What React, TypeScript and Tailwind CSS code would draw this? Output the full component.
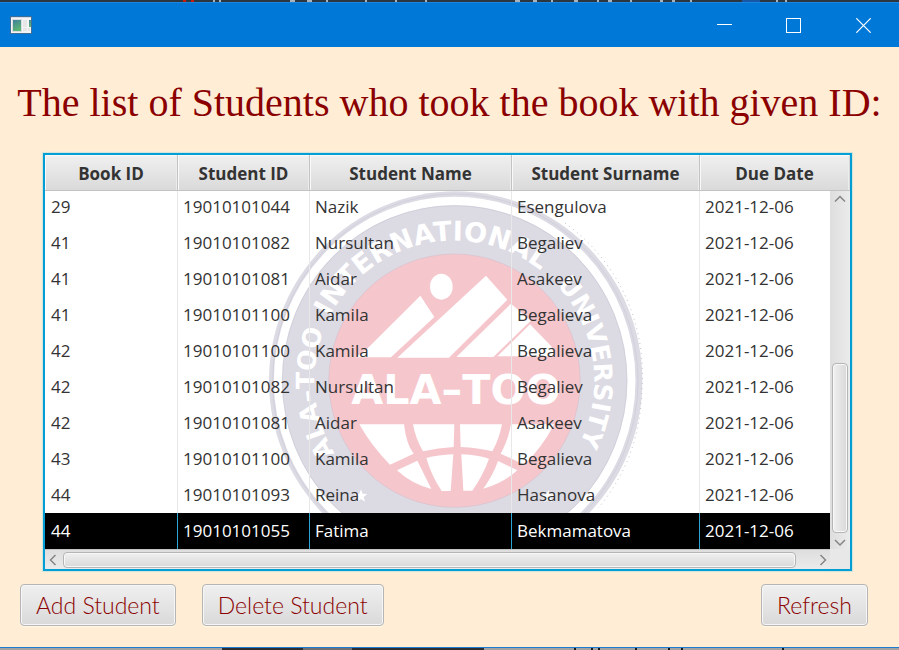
import React from "react";

type Loan = {
  book: string;
  student: string;
  name: string;
  surname: string;
  due: string;
};

const columns = ["Book ID", "Student ID", "Student Name", "Student Surname", "Due Date"];

const loans: Loan[] = [
  { book: "29", student: "19010101044", name: "Nazik", surname: "Esengulova", due: "2021-12-06" },
  { book: "41", student: "19010101082", name: "Nursultan", surname: "Begaliev", due: "2021-12-06" },
  { book: "41", student: "19010101081", name: "Aidar", surname: "Asakeev", due: "2021-12-06" },
  { book: "41", student: "19010101100", name: "Kamila", surname: "Begalieva", due: "2021-12-06" },
  { book: "42", student: "19010101100", name: "Kamila", surname: "Begalieva", due: "2021-12-06" },
  { book: "42", student: "19010101082", name: "Nursultan", surname: "Begaliev", due: "2021-12-06" },
  { book: "42", student: "19010101081", name: "Aidar", surname: "Asakeev", due: "2021-12-06" },
  { book: "43", student: "19010101100", name: "Kamila", surname: "Begalieva", due: "2021-12-06" },
  { book: "44", student: "19010101093", name: "Reina", surname: "Hasanova", due: "2021-12-06" },
  { book: "44", student: "19010101055", name: "Fatima", surname: "Bekmamatova", due: "2021-12-06" },
];

const selectedRow = 9;

function AppIcon() {
  return (
    <svg width="22" height="18" viewBox="0 0 22 18" aria-hidden="true">
      <defs>
        <linearGradient id="pane" x1="0" y1="0" x2="0.4" y2="1">
          <stop offset="0" stopColor="#3f7f9c" />
          <stop offset="1" stopColor="#5cb574" />
        </linearGradient>
      </defs>
      <rect width="22" height="18" fill="#3f6f96" />
      <rect x="1" y="1" width="20" height="16" fill="#f4f4f4" />
      <rect x="1" y="1" width="20" height="1" fill="#d5dbe6" />
      <rect x="2" y="3" width="10" height="13" fill="#d9dde2" />
      <rect x="3" y="4" width="8" height="11" fill="url(#pane)" />
      <rect x="13" y="4" width="4" height="7" fill="#e6e6e6" />
      <rect x="13" y="12" width="4" height="3" fill="#e6e6e6" />
      <rect x="19" y="4" width="2" height="7" fill="url(#pane)" />
      <rect x="18" y="12" width="2" height="3" fill="#e6e6e6" />
    </svg>
  );
}

function TitleBar() {
  return (
    <header className="flex h-[45px] items-center justify-between border-t border-[#1c86dc] bg-[#0078d7] pl-[10px]">
      <AppIcon />
      <div className="flex h-full">
        <button type="button" aria-label="Minimize" className="flex w-[69px] items-center justify-center">
          <svg width="15" height="15" viewBox="0 0 15 15" shapeRendering="crispEdges">
            <path d="M0 6.5H15" stroke="#fff" />
          </svg>
        </button>
        <button type="button" aria-label="Maximize" className="flex w-[69px] items-center justify-center">
          <svg width="15" height="15" viewBox="0 0 15 15" shapeRendering="crispEdges">
            <rect x="0.5" y="0.5" width="14" height="14" fill="none" stroke="#fff" />
          </svg>
        </button>
        <button type="button" aria-label="Close" className="flex w-[71px] items-center justify-center">
          <svg width="15" height="15" viewBox="0 0 15 15">
            <path d="M0.3 0.3L14.7 14.7M14.7 0.3L0.3 14.7" stroke="#fff" strokeWidth="1.2" />
          </svg>
        </button>
      </div>
    </header>
  );
}

function TopEdge() {
  return (
    <div className="h-[2px] overflow-hidden bg-[#2b3640]">
      <svg width="899" height="2" viewBox="0 0 899 2" shapeRendering="crispEdges" aria-hidden="true">
        <path d="M183 1h3M191 1h3" stroke="#c8190b" strokeWidth="2" />
        <path
          d="M213 1h2M219 1h2M290 1h5M307 1h5M326 0.5h2M365 1h2M395 1h2M425 0.5h2M515 1h5M533 1h4M551 1h2M574 1h4M597 1h2M608 1h4M630 1h2M660 1h3M672 1h3M690 1h2M776 1h2M785 1h2"
          stroke="#aab3bb"
          strokeWidth="2"
        />
        <path d="M742 1h18" stroke="#1657a8" strokeWidth="2" />
      </svg>
    </div>
  );
}

function BottomEdge() {
  return (
    <div className="h-[3px] overflow-hidden border-t border-[#1c7cd0] bg-[#a3a3a3]">
      <svg width="899" height="2" viewBox="0 0 899 2" shapeRendering="crispEdges" aria-hidden="true">
        <path d="M222 1h81M352 1h132" stroke="#2e2c2e" strokeWidth="2" />
        <path d="M303 1h49" stroke="#706e70" strokeWidth="2" />
        <path d="M574 1h2M591 1h2M598 1h2M635 1h2M668 1h2M681 1h2M782 1h2" stroke="#1a1a1a" strokeWidth="2" />
      </svg>
    </div>
  );
}

function Watermark() {
  return (
    <svg
      className="absolute top-9 left-[220px]"
      width="385"
      height="358"
      viewBox="0 9 1155 1074"
      aria-hidden="true"
      fontFamily="'DejaVu Sans', sans-serif"
      fontWeight="bold"
    >
      <defs>
        <path id="ring" d="M568 998A420 420 0 0 1 568 158A420 420 0 0 1 568 998" />
      </defs>
      <ellipse cx="572" cy="578" rx="560" ry="568" fill="#dcdae3" />
      <ellipse cx="571" cy="578" rx="548" ry="560" fill="none" stroke="#cccad8" strokeWidth="2" />
      <ellipse cx="569" cy="578" rx="530" ry="539" fill="none" stroke="#fff" strokeWidth="25" />
      <ellipse cx="569" cy="578" rx="517" ry="525" fill="none" stroke="#c9c8d4" strokeWidth="2" />
      <path
        d="M900 105C1060 220 1138 400 1132 580C1128 740 1090 850 1000 960"
        fill="none"
        stroke="#c4c2d0"
        strokeWidth="3"
        strokeDasharray="3 12"
      />
      <ellipse cx="568.5" cy="578" rx="377" ry="380" fill="#f5c7cd" stroke="#d8bfcc" strokeWidth="2" />

      <g fill="#fff" fontSize="76">
        <text>
          <textPath href="#ring" startOffset="430">ALA–TOO</textPath>
        </text>
        <text fontSize="82">
          <textPath href="#ring" startOffset="858">INTERNATIONAL</textPath>
        </text>
        <text>
          <textPath href="#ring" startOffset="1662">UNIVERSITY</textPath>
        </text>
      </g>

      <g fill="#fff">
        <ellipse cx="529" cy="296" rx="34" ry="39" />
        <path d="M466 323L508 387L378 508H272L305 484Z" />
        <path d="M663 263L727 335L552 509H397Z" />
        <path d="M738 347L797 398L685 507H574Z" />
        <path d="M795 409L858 474L872 505H697Z" />
        <path d="M283 709H417Q424 770 446 797L375 830Q320 775 283 709Z" />
        <path d="M444 709H568L566 777Q520 780 474 790Q451 750 444 709Z" />
        <path d="M585 709H711Q702 755 682 790Q640 779 587 777Z" />
        <path d="M738 709H868Q830 780 778 830L707 797Q730 755 738 709Z" />
        <path d="M396 847L457 818L499 903Q440 888 396 847Z" />
        <path d="M484 810Q520 801 565 799L557 909H530Q500 865 484 810Z" />
        <path d="M589 799Q640 801 672 812Q655 860 622 908H595Z" />
        <path d="M699 819L757 847Q715 885 655 902Q685 860 699 819Z" />
        <path d="M288 904l5 13 14 1-11 9 4 14-12-8-12 8 4-14-11-9 14-1Z" />
        <path d="M850 906l5 13 14 1-11 9 4 14-12-8-12 8 4-14-11-9 14-1Z" />
      </g>
      <text x="573" y="648" fontSize="124" textAnchor="middle" fill="#fff">
        ALA–TOO
      </text>
    </svg>
  );
}

function Chevron({ path, label }: { path: string; label: string }) {
  return (
    <button type="button" aria-label={label} className="flex size-4 items-center justify-center">
      <svg width="12" height="12" viewBox="0 0 12 12">
        <path d={path} fill="none" stroke="#858585" strokeWidth="1.5" />
      </svg>
    </button>
  );
}

function VerticalScrollbar() {
  return (
    <div className="absolute top-9 right-0 bottom-0 flex w-5 flex-col items-center bg-linear-to-r from-[#dedede] to-[#ebebeb]">
      <Chevron label="Scroll up" path="M1 8.500L6 3.500L11 8.500" />
      <div className="flex w-full flex-1 flex-col justify-end px-[2px] pt-[156px]">
        <div className="flex-1 rounded-[4px] border border-[#b5b5b5] bg-linear-to-r from-[#f0f0f0] to-[#d9d9d9] shadow-[inset_0_0_0_1px_#f8f8f8]" />
      </div>
      <Chevron label="Scroll down" path="M1 5L6 10L11 5" />
    </div>
  );
}

function HorizontalScrollbar() {
  return (
    <div className="flex h-5 bg-[#e8e8e8]">
      <div className="flex flex-1 items-center border-t border-[#c4c4c4] bg-linear-to-b from-[#dedede] to-[#ebebeb]">
        <Chevron label="Scroll left" path="M8.500 1L3.500 6L8.500 11" />
        <div className="flex-1 pr-[18px] pl-[2px]">
          <div className="h-4 rounded-[4px] border border-[#b5b5b5] bg-linear-to-b from-[#f0f0f0] to-[#d9d9d9] shadow-[inset_0_0_0_1px_#f8f8f8]" />
        </div>
        <Chevron label="Scroll right" path="M4.500 1L9.500 6L4.500 11" />
      </div>
      <div className="w-5" />
    </div>
  );
}

function LoanTable() {
  return (
    <div className="mr-[47px] ml-[43px] border-2 border-[#039ed3] bg-white shadow-[0_0_1px_1px_#d5e3d8]">
      <div className="relative isolate overflow-hidden">
        <Watermark />
        <table className="relative w-full table-fixed border-separate border-spacing-0 font-['Open_Sans',sans-serif] text-[17px] leading-6 text-[#333]">
          <colgroup>
            <col className="w-[133px]" />
            <col className="w-[132px]" />
            <col className="w-[202px]" />
            <col className="w-[188px]" />
            <col />
          </colgroup>
          <thead>
            <tr className="h-9">
              {columns.map((c) => (
                <th
                  key={c}
                  scope="col"
                  className="border-r border-b border-[#c3c3c3] bg-linear-to-b from-[#f0f0f0] to-[#dadada] p-0 pt-0.5 text-center font-bold shadow-[inset_1px_1px_0_#f9f9f9,inset_-1px_0_0_#ececec] last:border-r-[#d8d8d8]"
                >
                  {c}
                </th>
              ))}
            </tr>
          </thead>
          <tbody>
            {loans.map((l, i) => (
              <tr
                key={i}
                aria-selected={i === selectedRow}
                className={i === selectedRow ? "h-9 bg-black text-white" : "h-9 first:h-[34px]"}
              >
                {[l.book, l.student, l.name, l.surname, l.due].map((v, j) => (
                  <td
                    key={j}
                    className={
                      i === selectedRow
                        ? "border-r border-[#2aa5d6] p-0 pl-[5px] whitespace-nowrap first:pl-[6px] last:border-r-0"
                        : i === 0
                          ? "border-r border-[#e8e8e8] p-0 pb-0.5 pl-[5px] whitespace-nowrap first:pl-[6px] last:border-r-0"
                          : "border-r border-[#e8e8e8] p-0 pl-[5px] whitespace-nowrap first:pl-[6px] last:border-r-0"
                    }
                  >
                    {v}
                  </td>
                ))}
              </tr>
            ))}
          </tbody>
        </table>
        <VerticalScrollbar />
      </div>
      <HorizontalScrollbar />
    </div>
  );
}

function ActionButton({ children }: { children: React.ReactNode }) {
  return (
    <button
      type="button"
      className="h-[42px] rounded-[4px] border border-[#b5b5b5] bg-linear-to-b from-[#f0f0f0] to-[#d9d9d9] px-[15px] font-['Lato',sans-serif] text-[23px] leading-7 font-light whitespace-nowrap text-[#8b0000] shadow-[inset_0_0_0_1px_#f6f6f6,0_1px_1px_#fff7e8]"
    >
      {children}
    </button>
  );
}

export default function App() {
  return (
    <div className="flex min-h-screen flex-col bg-[#ffeed5]">
      <TopEdge />
      <TitleBar />
      <main className="flex flex-1 flex-col">
        <h1 className="pt-8 pb-[26px] text-center font-['Liberation_Serif',serif] text-[40px] leading-[48px] whitespace-nowrap text-[#8b0000]">
          The list of Students who took the book with given ID:
        </h1>
        <LoanTable />
        <div className="flex gap-[26px] pt-[13px] pr-[31px] pb-5 pl-5">
          <ActionButton>Add Student</ActionButton>
          <ActionButton>Delete Student</ActionButton>
          <div className="ml-auto">
            <ActionButton>Refresh</ActionButton>
          </div>
        </div>
      </main>
      <BottomEdge />
    </div>
  );
}
